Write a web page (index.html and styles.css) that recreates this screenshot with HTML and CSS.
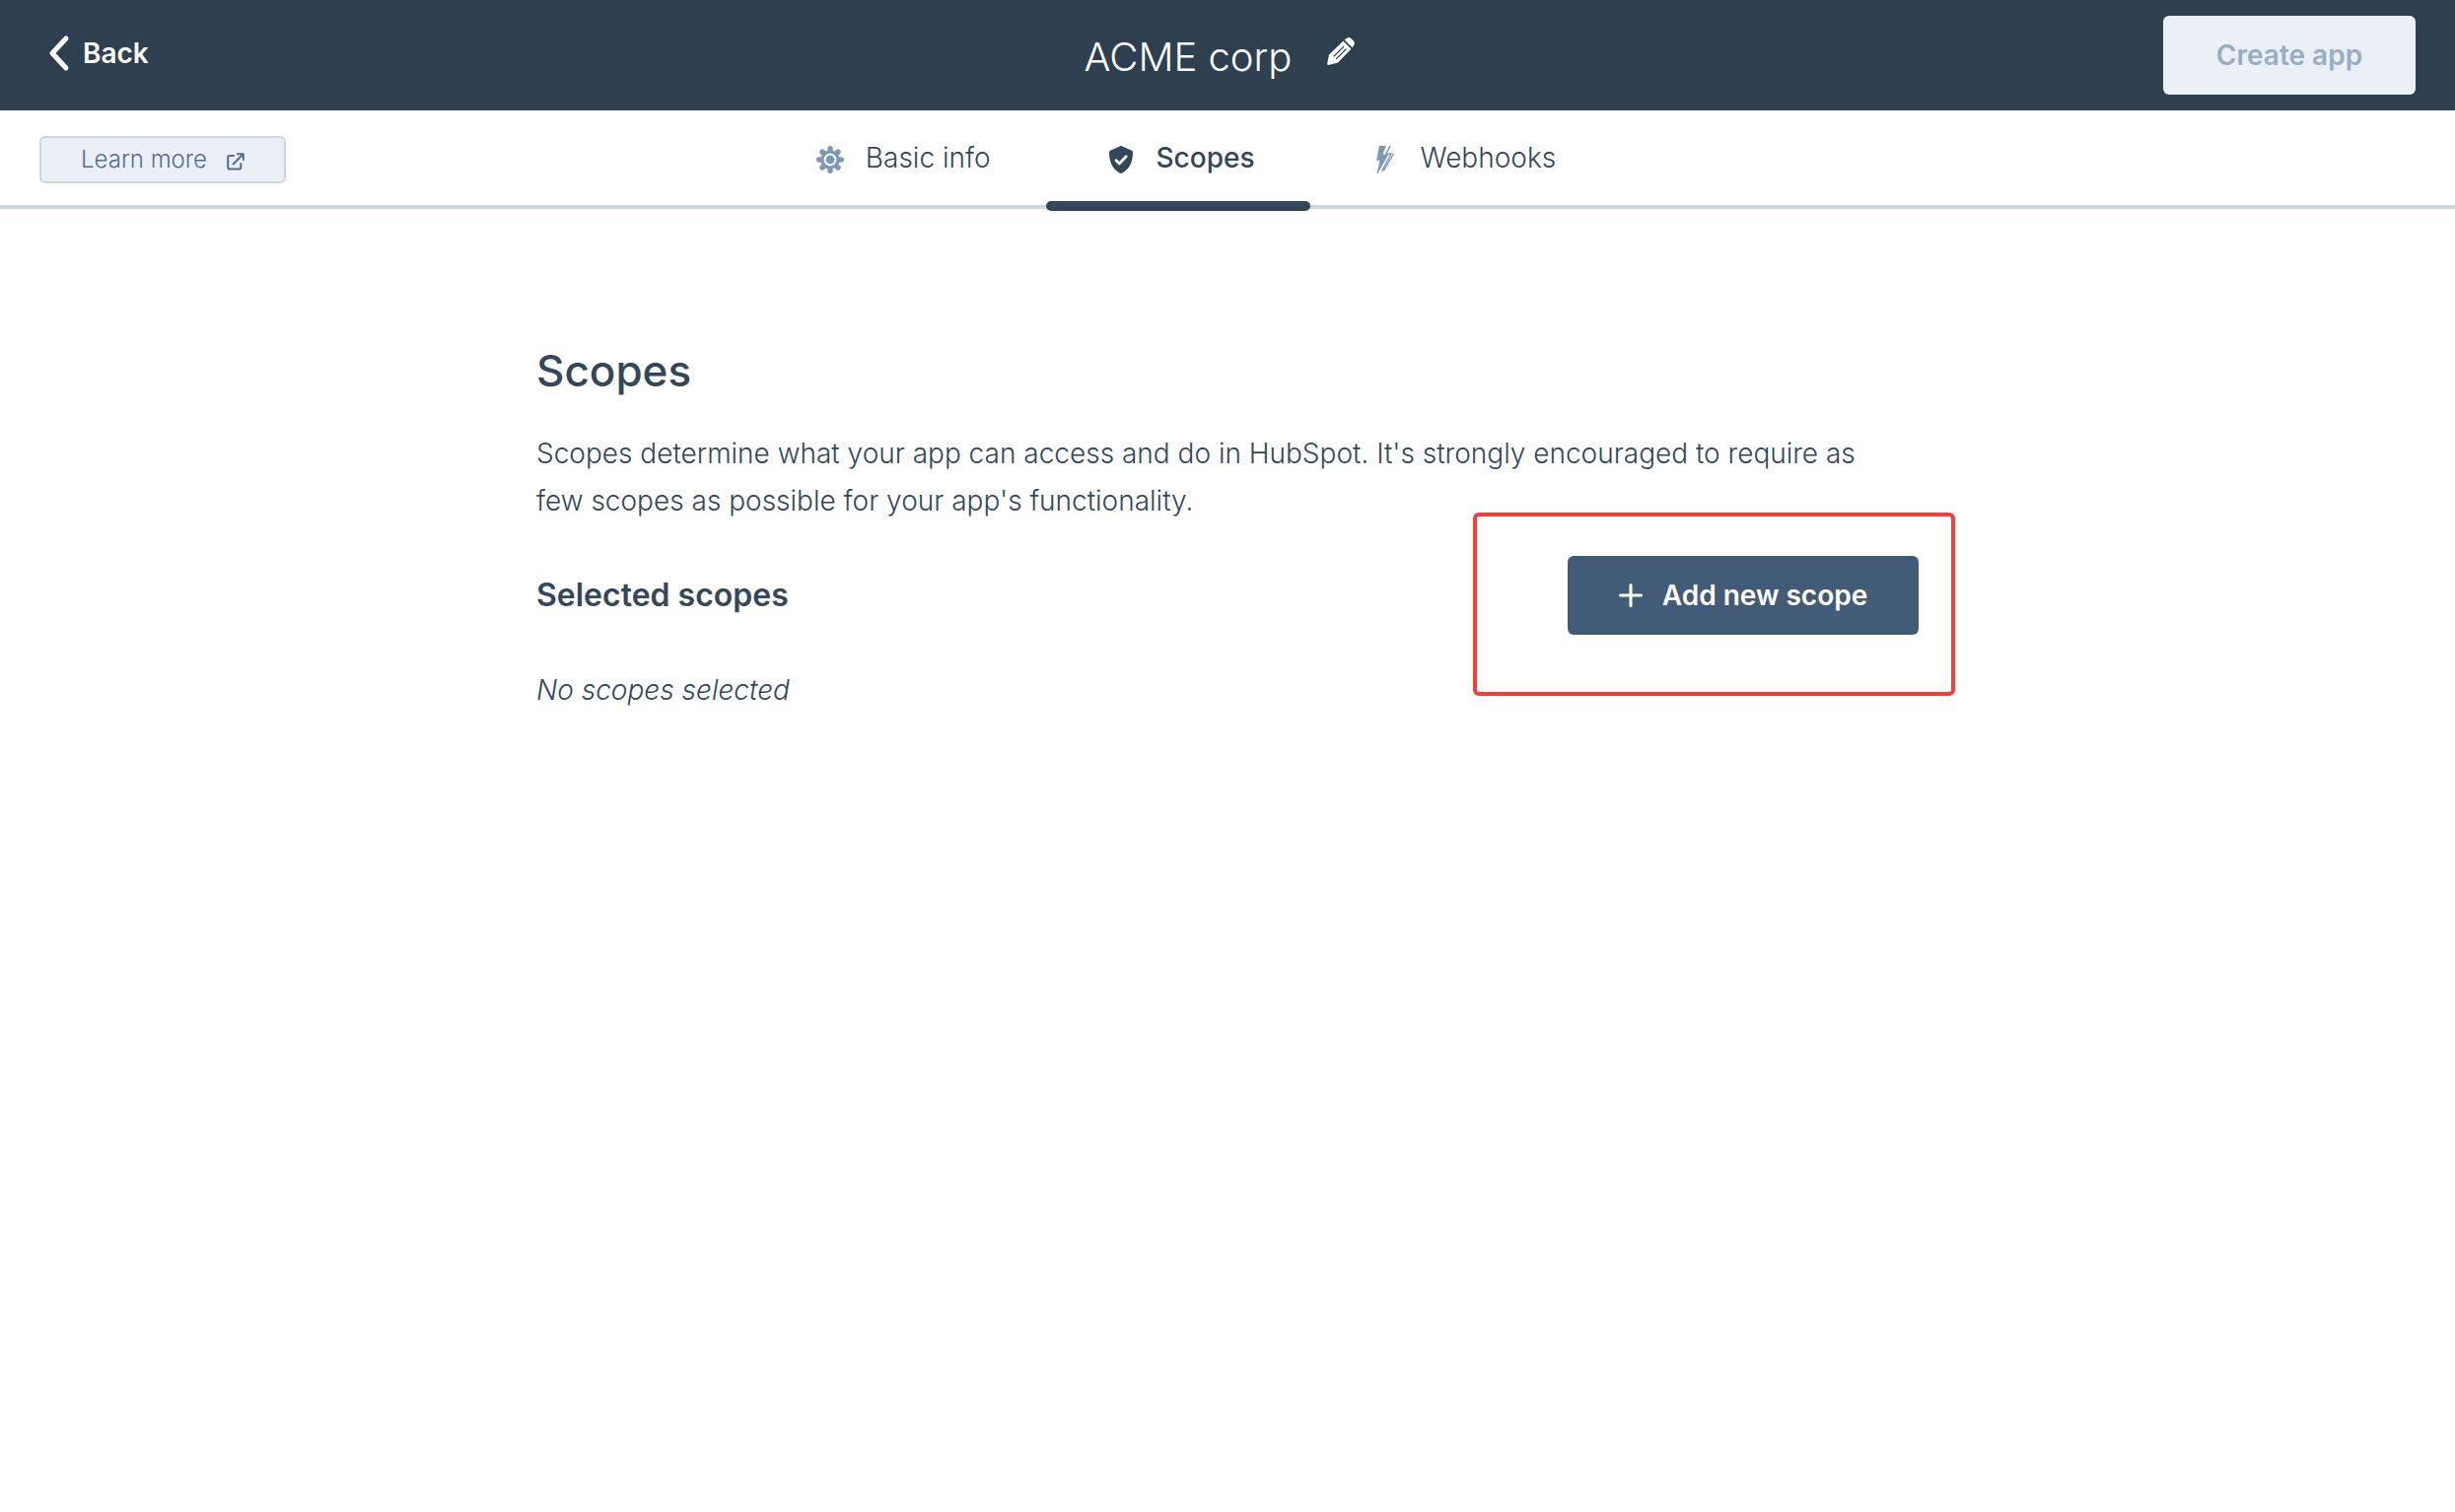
FILE: index.html
```html
<!DOCTYPE html>
<html lang="en">
<head>
<meta charset="utf-8">
<meta name="viewport" content="width=device-width, initial-scale=1">
<title>ACME corp - Scopes</title>
<link rel="stylesheet" href="styles.css">
</head>
<body>
<header class="topbar">
  <a class="back" href="#">
    <svg width="20" height="36" viewBox="0 0 20 36" aria-hidden="true"><path d="M17 3 3 18l14 15" fill="none" stroke="currentColor" stroke-width="5" stroke-linecap="round" stroke-linejoin="round"/></svg>
    <span>Back</span>
  </a>
  <div class="app-name">
    <span class="app-title">ACME corp</span>
    <button class="edit" type="button" aria-label="Edit app name">
      <svg width="28" height="28" viewBox="0 0 28 28" aria-hidden="true"><path fill="currentColor" d="M16.500 3.500 24.500 11.500 11 25.500 1.500 28Q0 28.200 .2 26.500L2 17.500Z"/><path fill="currentColor" d="M17.500 2.500 20 .8Q22-.5 24 .7L27.300 4Q28.600 6 27 8L25.500 10.500Z"/><path d="M16.500 9.500 7 19M19 12 9.500 21.500" fill="none" stroke="#2e3f50" stroke-width="1.100" stroke-linecap="round"/><path d="m16.800 2.700 8.500 8.500" fill="none" stroke="#2e3f50" stroke-width="1.300"/></svg>
    </button>
  </div>
  <button class="btn btn-disabled" type="button" disabled>Create app</button>
</header>

<div class="subbar">
  <a class="learn-more" href="#">
    <span>Learn more</span>
    <svg width="18" height="18" viewBox="0 0 18 18" aria-hidden="true"><path d="M7 3H3Q1.200 3 1.200 4.800V14.800Q1.200 16.600 3 16.600H12.500Q14.300 16.600 14.300 14.800V11M6.500 11.500 16.300 1.700M11 1.200H16.800V7" fill="none" stroke="currentColor" stroke-width="2" stroke-linecap="round" stroke-linejoin="round"/></svg>
  </a>
  <nav class="tabs" aria-label="App settings">
    <a class="tab" href="#">
      <svg class="tab-icon" viewBox="0 0 28 28" aria-hidden="true"><g stroke="currentColor" stroke-width="5.400" stroke-linecap="round"><path d="M14 2.700V25.300M2.700 14H25.300M6 6 22 22M22 6 6 22"/></g><circle cx="14" cy="14" r="9.500" fill="currentColor"/><circle cx="14" cy="14" r="5.400" fill="currentColor" stroke="#fff" stroke-width="2"/></svg>
      <span>Basic info</span>
    </a>
    <a class="tab tab-active" href="#" aria-current="page">
      <svg class="tab-icon" viewBox="0 0 28 28" aria-hidden="true"><path fill="currentColor" d="M14 0Q15 0 15.800.7L24.500 4.500Q26 5.200 26 6.500C26 16 23 23.500 15.300 27.500Q14 28.300 12.700 27.500C5 23.500 2 16 2 6.500Q2 5.200 3.500 4.500L12.200.7Q13 0 14 0Z"/><path d="m9 14.700 3.300 3.300 6.900-7.200" fill="none" stroke="#fff" stroke-width="2.800" stroke-linecap="round" stroke-linejoin="round"/></svg>
      <span>Scopes</span>
    </a>
    <a class="tab" href="#">
      <svg class="tab-icon" viewBox="0 0 28 28" aria-hidden="true"><path fill="currentColor" d="M8 0H15L11.500 8.500 17 9 6.500 28H5.500L8.500 15 5 14.500Z"/><path d="M19 0 15 8H20L10.500 26M22.500 8 12.500 25" fill="none" stroke="currentColor" stroke-width="1.400"/></svg>
      <span>Webhooks</span>
    </a>
  </nav>
</div>

<main class="content">
  <h1 class="page-title">Scopes</h1>
  <p class="intro">Scopes determine what your app can access and do in HubSpot. It's strongly encouraged to require as few scopes as possible for your app's functionality.</p>
  <div class="selected">
    <h2 class="section-title">Selected scopes</h2>
    <div class="add-wrap">
      <button class="btn btn-primary" type="button">
        <svg width="24" height="24" viewBox="0 0 24 24" aria-hidden="true"><path d="M12 1.500V22.500M1.500 12H22.500" stroke="currentColor" stroke-width="3" stroke-linecap="round"/></svg>
        <span>Add new scope</span>
      </button>
      <div class="highlight"></div>
    </div>
  </div>
  <p class="empty">No scopes selected</p>
</main>
</body>
</html>
```
FILE: styles.css
```css
* {
  box-sizing: border-box;
}

body {
  margin: 0;
  background: #fff;
  color: #33475b;
  font-family: Inter, "Liberation Sans", sans-serif;
  font-size: 28px;
  font-weight: 300;
  line-height: 48px;
}

a {
  color: inherit;
  text-decoration: none;
}

button {
  font: inherit;
  border: 0;
}

svg {
  flex: none;
  overflow: visible;
}

.topbar {
  display: grid;
  grid-template-columns: 240px 1fr 256px;
  align-items: center;
  height: 112px;
  padding: 0 40px;
  background: #2e3f50;
  color: #fff;
}

.back {
  display: flex;
  align-items: center;
  gap: 14px;
  padding: 0 0 4px 10px;
  font-weight: 600;
}

.app-name {
  display: flex;
  justify-content: center;
  align-items: center;
  gap: 36px;
}

.app-title {
  padding-top: 4px;
  font-size: 40px;
}

.edit {
  display: flex;
  padding: 0 0 8px;
  background: none;
  color: #fff;
}

.btn {
  display: flex;
  justify-content: center;
  align-items: center;
  gap: 20px;
  height: 80px;
  border-radius: 6px;
  font-weight: 600;
}

.btn-disabled {
  background: #eaf0f6;
  color: #99acc2;
}

.btn-primary {
  width: 356px;
  background: #425b76;
  color: #fff;
}

.subbar {
  display: grid;
  grid-template-columns: 250px 1fr 340px;
  align-items: end;
  height: 100px;
  padding: 0 40px;
  border-bottom: 4px solid #cbd6e2;
}

.learn-more {
  display: flex;
  justify-content: center;
  align-items: center;
  gap: 20px;
  height: 48px;
  margin-bottom: 22px;
  border: 2px solid #cbd6e2;
  border-radius: 6px;
  background: #eaf0f6;
  color: #506e91;
  font-size: 24px;
}

.learn-more svg {
  margin-top: 4px;
}

.tabs {
  display: flex;
  justify-content: center;
}

.tab {
  position: relative;
  display: flex;
  align-items: center;
  gap: 22px;
  height: 96px;
  padding: 0 56px 0 62px;
}

.tab-icon {
  width: 28px;
  height: 28px;
  margin-top: 4px;
  color: #7c98b6;
}

.tab-active {
  font-weight: 500;
}

.tab-active .tab-icon {
  color: #33475b;
}

.tab-active::after {
  content: "";
  position: absolute;
  left: 0;
  right: 0;
  bottom: -6px;
  height: 10px;
  border-radius: 5px;
  background: #33475b;
}

.content {
  max-width: 1402px;
  margin: 0 auto;
  padding-top: 136px;
}

.page-title {
  margin: 0;
  font-size: 44px;
  font-weight: 500;
  line-height: 56px;
}

.intro {
  max-width: 1380px;
  margin: 32px 0;
}

.selected {
  display: flex;
  justify-content: space-between;
  align-items: center;
}

.section-title {
  margin: 0;
  font-size: 32px;
  font-weight: 600;
}

.add-wrap {
  position: relative;
}

.highlight {
  position: absolute;
  inset: -44px -37px -62px -96px;
  border: 4px solid #f53d3a;
  border-radius: 6px;
  pointer-events: none;
}

.empty {
  margin: 32px 0;
  font-style: italic;
}
```
